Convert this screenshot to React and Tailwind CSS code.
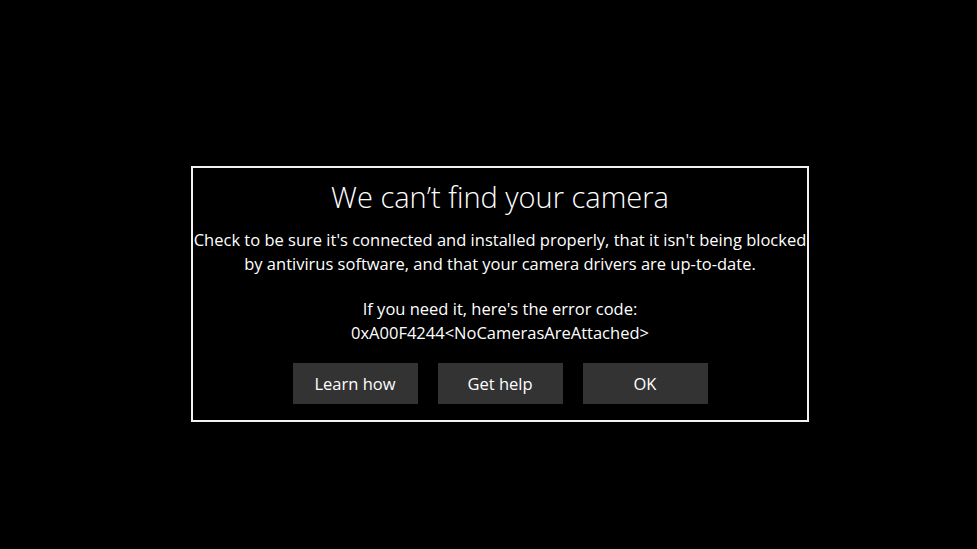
import React from 'react';

const font = { fontFamily: '"Open Sans", "Noto Sans", sans-serif' };

export default function App() {
  const buttons = ['Learn how', 'Get help', 'OK'];

  return (
    <div className="min-h-screen w-full bg-black pl-[191px] pt-[166px]" style={font}>
      <div className="w-[618px] h-[256px] border-2 border-[#f2f2f2] overflow-hidden flex flex-col items-center pt-[11px] text-white">
        <h1 className="text-[29px] leading-[36px] font-light whitespace-nowrap">We can’t find your camera</h1>

        {/* first line is wider than the dialog in the original too, so it gets clipped on both sides */}
        <div className="mt-[13px] flex flex-col items-center text-[16.5px] leading-[24px]">
          <p className="whitespace-nowrap">Check to be sure it's connected and installed properly, that it isn't being blocked</p>
          <p className="whitespace-nowrap">by antivirus software, and that your camera drivers are up-to-date.</p>
        </div>

        <div className="mt-[21px] flex flex-col items-center text-[16.5px] leading-[24px]">
          <p className="whitespace-nowrap">If you need it, here's the error code:</p>
          <p className="whitespace-nowrap">0xA00F4244&lt;NoCamerasAreAttached&gt;</p>
        </div>

        <div className="mt-[18px] flex gap-5">
          {buttons.map((label) => (
            <button
              key={label}
              className="w-[125px] h-[41px] bg-[#333333] text-white text-[16.5px] leading-[24px] flex items-center justify-center"
            >
              {label}
            </button>
          ))}
        </div>
      </div>
    </div>
  );
}
